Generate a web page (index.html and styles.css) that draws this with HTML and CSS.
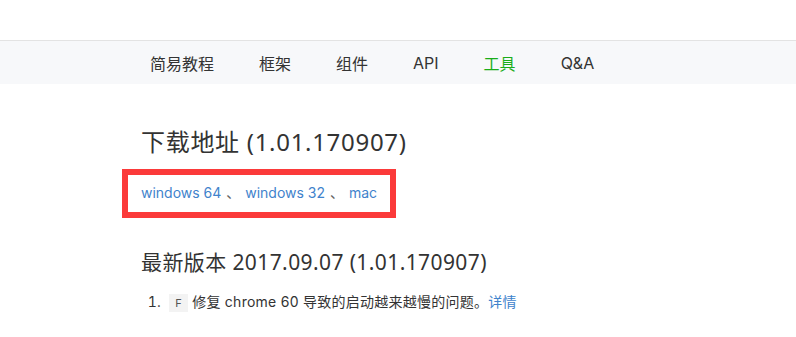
FILE: index.html
```html
<!DOCTYPE html>
<html lang="zh-CN">
<head>
  <meta charset="UTF-8" />
  <meta name="viewport" content="width=device-width, initial-scale=1.0"/>
  <title>工具</title>
  <link rel="stylesheet" href="styles.css">
</head>
<body>

  <div class="top-space"></div>

  <div class="nav-bar">
    <a href="#" class="nav-item">简易教程</a>
    <a href="#" class="nav-item">框架</a>
    <a href="#" class="nav-item">组件</a>
    <a href="#" class="nav-item">API</a>
    <a href="#" class="nav-item active">工具</a>
    <a href="#" class="nav-item">Q&amp;A</a>
  </div>

  <div class="content">
    <h1 class="title">下载地址 (1.01.170907)</h1>

    <div class="download-box">
      <a href="#" class="link">windows 64</a>
      <span class="sep">、</span>
      <a href="#" class="link">windows 32</a>
      <span class="sep">、</span>
      <a href="#" class="link">mac</a>
    </div>

    <h2 class="subtitle">最新版本 2017.09.07 (1.01.170907)</h2>

    <ol class="changes">
      <li><span class="tag">F</span> 修复 chrome 60 导致的启动越来越慢的问题。<a href="#" class="link">详情</a></li>
    </ol>
  </div>

</body>
</html>
```

FILE: styles.css
```css
body {
  font-family: Inter, "Noto Sans CJK SC", sans-serif;
  background: #fff;
  color: #333;
  margin: 0;
}

.top-space {
  height: 40px;
}

.nav-bar {
  display: flex;
  gap: 45px;
  align-items: center;
  height: 43px;
  padding-left: 150px;
  background-color: #f7f8fa;
  border-top: 1px solid #e3e3e3;
}

.nav-item {
  color: #333;
  text-decoration: none;
  font-size: 16px;
}

.nav-item.active {
  color: #1aad19;
}

.content {
  padding-left: 141px;
}

.title,
.subtitle {
  font-family: "Noto Sans", "Noto Sans CJK SC", sans-serif;
  font-weight: normal;
}

.title {
  font-size: 24px;
  letter-spacing: 0.7px;
  margin: 42px 0 11px;
  line-height: 32px;
}

.download-box {
  display: inline-block;
  margin-left: -19px;
  border: 6px solid #fb3a3a;
  padding: 6px 13px 7px 13px;
  font-size: 14px;
  line-height: 24px;
}

.link {
  color: #3f83cc;
  text-decoration: none;
}

.sep {
  color: #666;
  margin: 0 1px;
}

.subtitle {
  font-size: 21px;
  letter-spacing: 0.4px;
  margin: 30px 0 14px;
  line-height: 28px;
}

.changes {
  margin: 0;
  padding-left: 24px;
  font-size: 14px;
  line-height: 24px;
  letter-spacing: 0.25px;
}

.tag {
  display: inline-block;
  background: #f3f3f3;
  color: #555;
  font-size: 11px;
  width: 19px;
  line-height: 18px;
  text-align: center;
  margin-left: 4px;
}
```
